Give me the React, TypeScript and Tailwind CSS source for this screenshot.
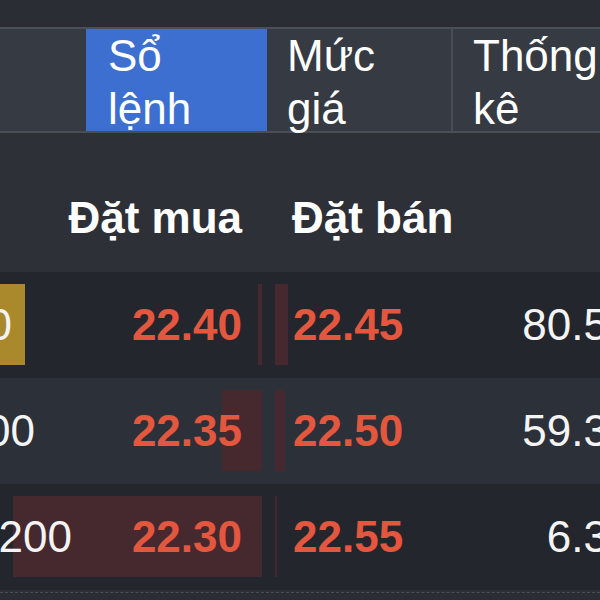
import React from "react";

type Row = {
  bg: string;
  vol: string;
  volW: string;
  gold: boolean;
  buy: string;
  buyBar: number;
  sell: string;
  sellBar: number;
  sv: string;
};

const rows: Row[] = [
  { bg: "bg-[#23262d]", vol: "1,500", volW: "w-[12px]", gold: true, buy: "22.40", buyBar: 4, sell: "22.45", sellBar: 13, sv: "80.5" },
  { bg: "bg-[#2c3038]", vol: "1,000", volW: "w-[35px]", gold: false, buy: "22.35", buyBar: 40, sell: "22.50", sellBar: 10, sv: "59.3" },
  { bg: "bg-[#23262d]", vol: "200", volW: "w-[72px]", gold: false, buy: "22.30", buyBar: 249, sell: "22.55", sellBar: 2, sv: "6.3" },
];

export default function App() {
  return (
    <div
      className="flex h-[600px] w-[600px] flex-col overflow-hidden bg-[#2d3037] text-white"
      style={{ fontFamily: '"Liberation Sans", Arial, sans-serif' }}
    >
      <div className="h-[27px] shrink-0 bg-[#2a2d33]" />
      <div className="flex h-[106px] shrink-0 border-y-2 border-[#4a4e57] bg-[#363a42] text-[44px] leading-[53px]">
        <div className="w-[86px] shrink-0" />
        <div className="w-[181px] shrink-0 bg-[#3d6fd0] pl-[22px]">
          <div>Sổ</div>
          <div>lệnh</div>
        </div>
        <div className="w-[186px] shrink-0 border-r-2 border-[#4a4e57] pl-[20px]">
          <div>Mức</div>
          <div>giá</div>
        </div>
        <div className="shrink-0 whitespace-nowrap pl-[20px]">
          <div>Thống</div>
          <div>kê</div>
        </div>
      </div>
      <div className="flex h-[139px] w-[610px] shrink-0 pt-[63px] text-[44px] font-bold leading-[44px]">
        <div className="w-[262px] shrink-0 pr-[20px] text-right">Đặt mua</div>
        <div className="w-[13px] shrink-0" />
        <div className="pl-[17px]">Đặt bán</div>
      </div>
      {rows.map((r, i) => (
        <div key={i} className={`flex h-[106px] w-[610px] shrink-0 ${r.bg} text-[44px] leading-[44px]`}>
          <div className="relative flex w-[262px] shrink-0 items-center">
            {r.gold && <div className="absolute bottom-[13px] left-0 top-[12px] w-[25px] bg-[#a9892b]" />}
            <div className="absolute bottom-[13px] right-0 top-[12px] bg-[#46292e]" style={{ width: r.buyBar }} />
            <div className={`relative flex ${r.volW} shrink-0 justify-end whitespace-nowrap text-[#f4f4f4]`}>{r.vol}</div>
            <div className="relative ml-auto pr-[20px] font-bold text-[#e4573f]">{r.buy}</div>
          </div>
          <div className="w-[13px] shrink-0" />
          <div className="relative flex w-[335px] shrink-0 items-center">
            <div className="absolute bottom-[13px] left-0 top-[12px] bg-[#46292e]" style={{ width: r.sellBar }} />
            <div className="relative pl-[18px] font-bold text-[#e4573f]">{r.sell}</div>
            <div className="relative ml-auto pr-[2px] text-[#f4f4f4]">{r.sv}</div>
          </div>
        </div>
      ))}
      <div className="mt-[2px] flex-1 border-t border-dashed border-[#4a4e57] bg-[#2a2d33]" />
    </div>
  );
}
